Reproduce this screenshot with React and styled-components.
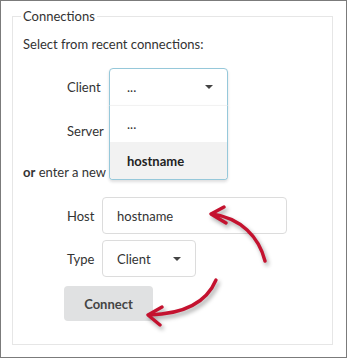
import React from "react";
import styled, { createGlobalStyle } from "styled-components";

const Global = createGlobalStyle`
  html, body { margin: 0; padding: 0; background: #fff; }
  body { font-family: Lato, "Open Sans", sans-serif; font-size: 13px; color: #333; }
  * { box-sizing: border-box; }
`;

const Frame = styled.div`
  position: relative;
  width: 347px;
  height: 358px;
  border: 1px solid #7b7b7b;
  padding: 6px 13px 12px 11px;
`;

const Fieldset = styled.fieldset`
  margin: 0;
  height: 100%;
  border: 1px solid #e6e6e6;
  padding: 0 10px;
  min-width: 0;
`;

const Legend = styled.legend`
  padding: 0 2px;
  margin-left: -2px;
  line-height: 18px;
  font-size: 13px;
  color: #333;
`;

const Para = styled.div`
  line-height: 18px;
  margin-top: ${(p) => p.$mt || 0}px;
`;

const Group = styled.div`
  display: grid;
  grid-template-columns: ${(p) => p.$col}px auto;
  row-gap: 6px;
  align-items: center;
  justify-items: start;
  margin-left: 44px;
  margin-top: ${(p) => p.$mt || 0}px;
`;

const Label = styled.label`
  line-height: 18px;
  color: #333;
`;

const SelectWrap = styled.div`
  position: relative;
`;

const Select = styled.div`
  display: flex;
  align-items: center;
  justify-content: space-between;
  width: ${(p) => p.$w}px;
  height: ${(p) => p.$h}px;
  padding: 0 14px 0 ${(p) => p.$pl || 13}px;
  background: #fff;
  border: 1px solid ${(p) => (p.$open ? "#96c8da" : "#dcdcdc")};
  border-radius: ${(p) => (p.$open ? "4px 4px 0 0" : "4px")};
  box-shadow: ${(p) => (p.$open ? "0 2px 3px 0 rgba(34,36,38,.15)" : "none")};
  color: #333;
`;

const Caret = styled.span`
  width: 0;
  height: 0;
  border-left: 4px solid transparent;
  border-right: 4px solid transparent;
  border-top: 4px solid #444;
`;

const Menu = styled.div`
  position: absolute;
  left: 0;
  top: 37px;
  width: 100%;
  background: #fff;
  border: 1px solid #96c8da;
  border-top: 1px solid #f2f2f2;
  border-radius: 0 0 4px 4px;
  box-shadow: 0 2px 3px 0 rgba(34,36,38,.15);
  overflow: hidden;
  z-index: 2;
`;

const Item = styled.div`
  height: ${(p) => p.$h}px;
  display: flex;
  align-items: center;
  padding-left: 17px;
  background: ${(p) => (p.$active ? "#f2f2f2" : "#fff")};
  font-weight: ${(p) => (p.$active ? 700 : 400)};
  color: ${(p) => (p.$active ? "#222" : "#333")};
`;

const Input = styled.div`
  width: 185px;
  height: 37px;
  display: flex;
  align-items: center;
  padding-left: 14px;
  border: 1px solid #dcdcdc;
  border-radius: 4px;
  color: #333;
`;

const Button = styled.button`
  margin: 9px 0 0 41px;
  width: 89px;
  height: 35px;
  border: none;
  border-radius: 4px;
  background: #e0e1e2;
  color: #444;
  font-family: inherit;
  font-size: 13px;
  font-weight: 700;
  padding: 0;
`;

const Overlay = styled.svg`
  position: absolute;
  left: -1px;
  top: -1px;
  pointer-events: none;
  filter: drop-shadow(2px 3px 2px rgba(0,0,0,0.35));
  z-index: 3;
`;

export default function App() {
  return (
    <>
      <Global />
      <Frame>
        <Fieldset>
          <Legend>Connections</Legend>
          <Para $mt={10}>Select from recent connections:</Para>
          <Group $col={42} $mt={15}>
            <Label>Client</Label>
            <SelectWrap>
              <Select $w={119} $h={38} $open $pl={17}>
                <span>...</span>
                <Caret />
              </Select>
              <Menu>
                <Item $h={36}>...</Item>
                <Item $h={37} $active>hostname</Item>
              </Menu>
            </SelectWrap>
            <Label>Server</Label>
            <Select $w={119} $h={38} $pl={17}>
              <span />
              <Caret />
            </Select>
          </Group>
          <Para $mt={13}>
            <b>or</b> enter a new connection:
          </Para>
          <Group $col={35} $mt={16}>
            <Label>Host</Label>
            <Input>hostname</Input>
            <Label>Type</Label>
            <Select $w={94} $h={37} $pl={14}>
              <span>Client</span>
              <Caret />
            </Select>
          </Group>
          <Button>Connect</Button>
        </Fieldset>
        <Overlay width="347" height="358" viewBox="0 0 347 358">
          <g fill="none" stroke="#c4122f" strokeWidth="3.4" strokeLinecap="round" strokeLinejoin="round">
            <path d="M265 261 C 259 237, 241 218, 212 214" />
            <path d="M224 207 L 211 214 L 226 223" />
            <path d="M216 280 C 206 304, 182 314, 149 315" />
            <path d="M162 307 L 148 315 L 160 325" />
          </g>
        </Overlay>
      </Frame>
    </>
  );
}
